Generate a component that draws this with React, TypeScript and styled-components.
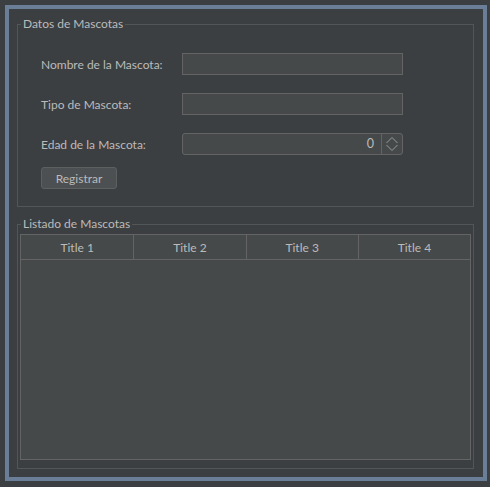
import React from "react";
import styled, { createGlobalStyle } from "styled-components";

const Global = createGlobalStyle`
  html, body { margin: 0; padding: 0; background: #3c3f41; }
  body { font-family: "Lato", "Open Sans", "DejaVu Sans", sans-serif; font-size: 12px; color: #bbbbbb; }
`;

const Frame = styled.div`
  margin: 5px;
  border: 4px solid #6a7e98;
  background: #3c3f41;
  padding: 7px 9px 8px 8px;
  box-sizing: border-box;
  width: 482px;
  height: 476px;
  display: flex;
  flex-direction: column;
  gap: 9px;
`;

const Group = styled.fieldset<{ $grow?: boolean; $pad: string }>`
  margin: 0;
  border: 1px solid #535657;
  padding: ${(p) => p.$pad};
  min-width: 0;
  ${(p) => (p.$grow ? "flex: 1; display: flex; flex-direction: column;" : "")}
`;

const Legend = styled.legend<{ $offset: number }>`
  padding: 0 2px;
  margin-left: ${(p) => p.$offset}px;
  line-height: 16px;
  font-size: 12px;
  color: #bbbbbb;
`;

const Form = styled.div`
  display: flex;
  flex-direction: column;
  gap: 18px;
  padding-left: 23px;
`;

const Row = styled.div`
  display: flex;
  align-items: center;
  height: 22px;
`;

const Label = styled.label`
  width: 141px;
  font-size: 12px;
  color: #bbbbbb;
`;

const Input = styled.div`
  width: 221px;
  height: 22px;
  box-sizing: border-box;
  border: 1px solid #646464;
  background: #45494a;
`;

const Spinner = styled.div`
  width: 221px;
  height: 22px;
  box-sizing: border-box;
  border: 1px solid #646464;
  border-radius: 3px;
  background: #45494a;
  display: flex;
`;

const SpinValue = styled.div`
  flex: 1;
  text-align: right;
  padding-right: 7px;
  line-height: 20px;
  font-size: 12.5px;
  color: #bbbbbb;
`;

const SpinButton = styled.div`
  width: 20px;
  border-left: 1px solid #646464;
  display: flex;
  align-items: center;
  justify-content: center;
`;

const Button = styled.button`
  margin-top: -6px;
  width: 76px;
  height: 22px;
  border: 1px solid #5e6060;
  border-radius: 3px;
  background: #4c5052;
  color: #bbbbbb;
  font-family: inherit;
  font-size: 12px;
  padding: 0;
  align-self: flex-start;
`;

const Table = styled.div`
  flex: 1;
  border: 1px solid #646464;
  background: #45494a;
  display: flex;
  flex-direction: column;
`;

const Header = styled.div`
  display: grid;
  grid-template-columns: 1fr 1fr 1fr 1fr;
  height: 25px;
  border-bottom: 1px solid #646464;
  box-sizing: border-box;
`;

const HeadCell = styled.div<{ $first?: boolean }>`
  display: flex;
  align-items: center;
  justify-content: center;
  border-left: ${(p) => (p.$first ? "none" : "1px solid #646464")};
  font-size: 12px;
  color: #bbbbbb;
`;

const Arrows = () => (
  <svg width="12" height="14" viewBox="0 0 12 14" fill="none" stroke="#9a9a9a" strokeWidth="1">
    <polyline points="0.5,6 6,0.5 11.5,6" />
    <polyline points="0.5,8 6,13.5 11.5,8" />
  </svg>
);

export default function App() {
  return (
    <>
      <Global />
      <Frame>
        <Group $pad="21px 10px 17px 0">
          <Legend $offset={3}>Datos de Mascotas</Legend>
          <Form>
            <Row>
              <Label>Nombre de la Mascota:</Label>
              <Input />
            </Row>
            <Row>
              <Label>Tipo de Mascota:</Label>
              <Input />
            </Row>
            <Row>
              <Label>Edad de la Mascota:</Label>
              <Spinner>
                <SpinValue>0</SpinValue>
                <SpinButton>
                  <Arrows />
                </SpinButton>
              </Spinner>
            </Row>
            <Button>Registrar</Button>
          </Form>
        </Group>
        <Group $grow $pad="2px 2px 8px 2px">
          <Legend $offset={1}>Listado de Mascotas</Legend>
          <Table>
            <Header>
              <HeadCell $first>Title 1</HeadCell>
              <HeadCell>Title 2</HeadCell>
              <HeadCell>Title 3</HeadCell>
              <HeadCell>Title 4</HeadCell>
            </Header>
          </Table>
        </Group>
      </Frame>
    </>
  );
}
